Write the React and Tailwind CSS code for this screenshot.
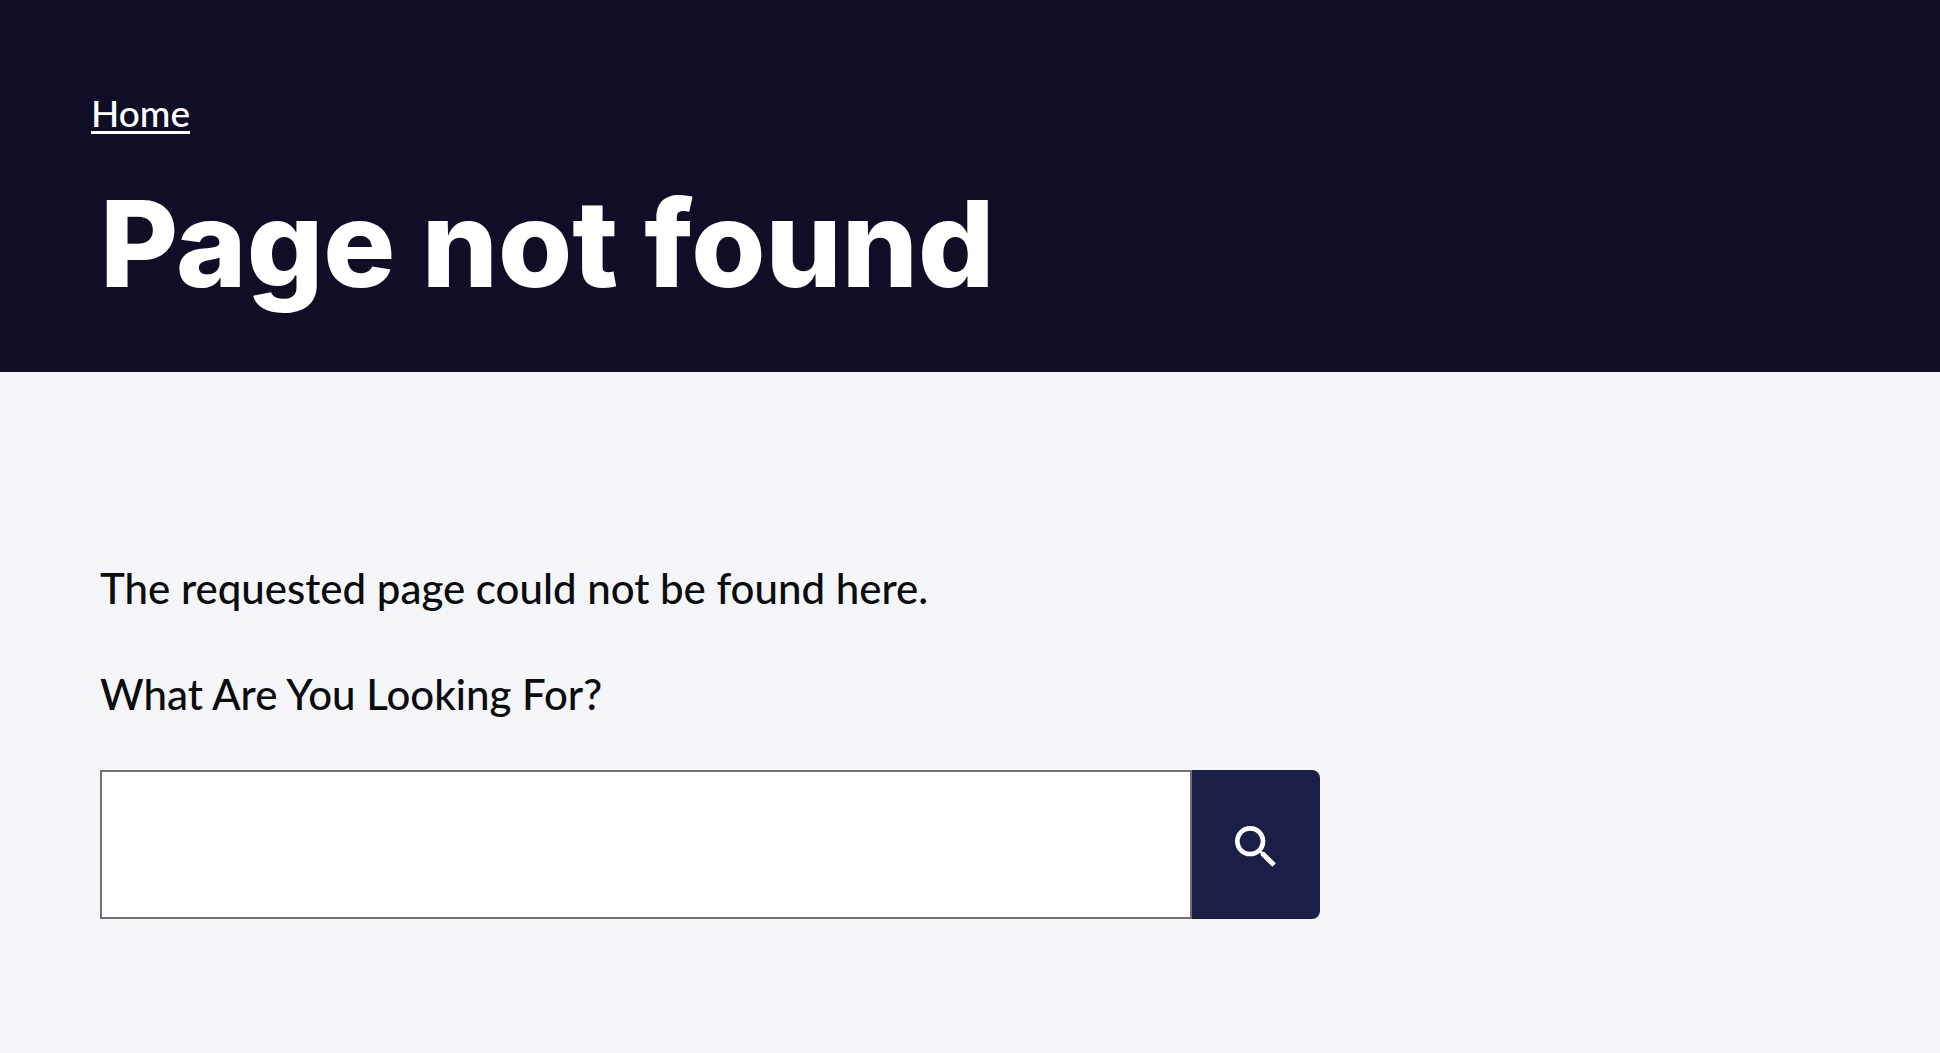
import { useState } from "react";
import { MdSearch } from "react-icons/md";

function PageHeader({ title }) {
  return (
    <header className="bg-[#0f0e26] pt-[90px] pr-[100px] pb-[48px] pl-[91px] text-white">
      <nav aria-label="Breadcrumb" className="flex text-[37px] leading-[46px] font-medium">
        <a href="/" className="underline decoration-3 underline-offset-4">
          Home
        </a>
      </nav>
      <h1 className="mt-[28px] pl-[9px] font-['Inter',sans-serif] text-[120px] leading-[160px] font-extrabold">
        {title}
      </h1>
    </header>
  );
}

function SearchForm() {
  const [query, setQuery] = useState("");

  return (
    <form role="search" onSubmit={(event) => event.preventDefault()} className="mt-[46px]">
      <label htmlFor="search" className="block">
        What Are You Looking For?
      </label>
      <div className="mt-[46px] flex h-[149px] w-full max-w-[1220px]">
        <input
          id="search"
          type="text"
          value={query}
          onChange={(event) => setQuery(event.target.value)}
          className="min-w-0 flex-1 border-2 border-[#6f7275] bg-white px-8 outline-none"
        />
        <button
          type="submit"
          aria-label="Search"
          className="flex w-[128px] items-center justify-center rounded-r-lg bg-[#1b1f47] pt-1 text-white"
        >
          <MdSearch className="size-14" />
        </button>
      </div>
    </form>
  );
}

export default function App() {
  return (
    <div className="min-h-screen bg-[#f4f6fa] font-['Lato',sans-serif]">
      <PageHeader title="Page not found" />
      <main className="px-[100px] pt-[186px] pb-[96px] text-[42px] leading-[60px] font-medium text-[#0b0c0e]">
        <p>The requested page could not be found here.</p>
        <SearchForm />
      </main>
    </div>
  );
}
